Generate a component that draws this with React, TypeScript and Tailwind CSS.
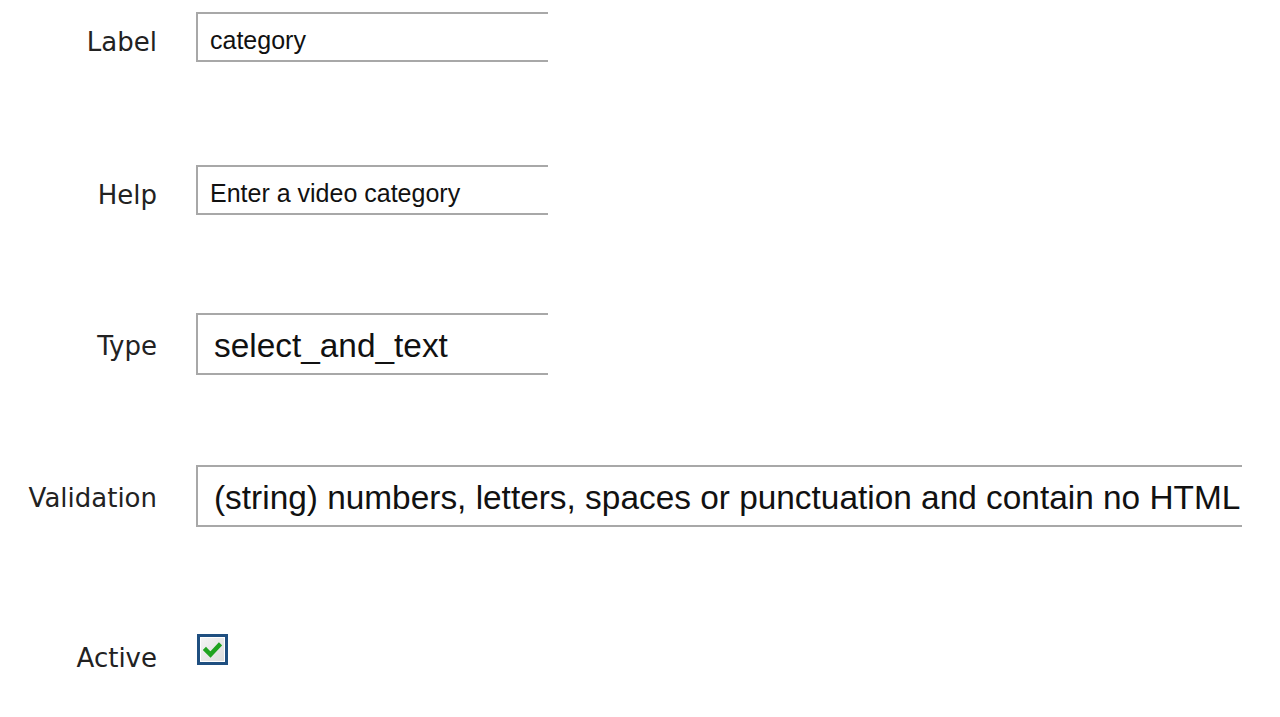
import React from 'react';

// Field rows for the custom field editor
const rows = [
  { label: 'Label', value: 'category', big: false, wide: false },
  { label: 'Help', value: 'Enter a video category', big: false, wide: false },
  { label: 'Type', value: 'select_and_text', big: true, wide: false },
  {
    label: 'Validation',
    value: '(string) numbers, letters, spaces or punctuation and contain no HTML',
    big: true,
    wide: true
  }
];

const labelFont = { fontFamily: '"DejaVu Sans", Verdana, sans-serif' };
const inputFont = { fontFamily: '"Liberation Sans", Arial, sans-serif' };

function FieldBox({ value, big, wide }: { value: string; big: boolean; wide: boolean }) {
  return (
    <div
      className={`flex items-center border-y-2 border-l-2 border-[#a8a8a8] bg-white overflow-hidden whitespace-nowrap text-[#111] ${
        wide ? 'w-[1046px]' : 'w-[352px]'
      } ${big ? 'h-[62px] pl-[16px] pt-[5px] text-[33.4px]' : 'h-[50px] pl-[12px] pt-[7px] text-[25px]'}`}
      style={inputFont}
    >
      {value}
    </div>
  );
}

export default function App() {
  return (
    <div className="min-h-screen bg-white text-[#222] pt-[12px]">
      <div className="flex flex-col">
        {rows.map((row, i) => (
          <div
            key={row.label}
            className={`flex items-center ${i === 0 ? '' : i === 1 ? 'mt-[103px]' : i === 2 ? 'mt-[98px]' : 'mt-[90px]'}`}
          >
            <div
              className={`w-[157px] text-right text-[26px] ${row.big ? 'pt-[4px]' : 'pt-[11px]'}`}
              style={labelFont}
            >
              {row.label}
            </div>
            <div className="ml-[39px]">
              <FieldBox value={row.value} big={row.big} wide={row.wide} />
            </div>
          </div>
        ))}

        {/* Active checkbox */}
        <div className="flex items-start mt-[107px]">
          <div className="w-[157px] text-right text-[26px] leading-[39px] mt-[5px]" style={labelFont}>
            Active
          </div>
          <div className="ml-[40px] w-[31px] h-[31px] border-[3px] border-[#1f4f80] p-[1px] bg-white">
            <div className="w-full h-full bg-gradient-to-br from-[#f4f4f4] to-[#dcdcdc] flex items-center justify-center">
              <svg width="19" height="16" viewBox="0 0 19 16">
                <path d="M3 8 L7.5 12.5 L16 3.5" fill="none" stroke="#1fa31f" strokeWidth="4.5" strokeLinecap="square" />
              </svg>
            </div>
          </div>
        </div>
      </div>
    </div>
  );
}
